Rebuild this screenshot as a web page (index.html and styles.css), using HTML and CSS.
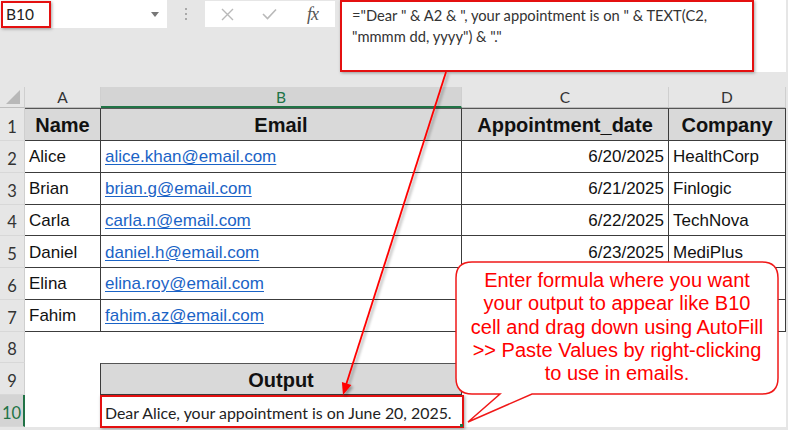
FILE: index.html
```html
<!DOCTYPE html>
<html>
<head>
<meta charset="utf-8">
<link rel="stylesheet" href="styles.css">
</head>
<body>
<div class="app">
  <div class="formula-row">
    <div class="namebox">
      <span class="name-ref">B10</span>
      <svg class="caret" width="8" height="5" viewBox="0 0 8 5"><path d="M0 0 H8 L4 5 Z" fill="#777"/></svg>
    </div>
    <div class="dots"><span></span><span></span><span></span></div>
    <div class="fbtns">
      <svg class="ico-x" width="13" height="13" viewBox="0 0 13 13"><path d="M1 1 L12 12 M12 1 L1 12" stroke="#b9b9b9" stroke-width="1.4" fill="none"/></svg>
      <svg class="ico-check" width="15" height="12" viewBox="0 0 15 12"><path d="M1 6 L5.5 10.5 L14 1.5" stroke="#b9b9b9" stroke-width="1.6" fill="none"/></svg>
      <span class="fx">fx</span>
    </div>
    <div class="fbar">
      <div class="fbar-hl">="Dear " &amp; A2 &amp; ", your appointment is on " &amp; TEXT(C2,<br>"mmmm dd, yyyy") &amp; "."</div>
    </div>
  </div>

  <div class="sheet">
    <div class="corner"><span class="tri"></span></div>
    <div class="colh">A</div>
    <div class="colh sel">B</div>
    <div class="colh">C</div>
    <div class="colh">D</div>

    <div class="rowh">1</div>
    <div class="c th">Name</div>
    <div class="c th">Email</div>
    <div class="c th">Appointment_date</div>
    <div class="c th">Company</div>

    <div class="rowh">2</div>
    <div class="c">Alice</div>
    <div class="c"><span class="link">alice.khan@email.com</span></div>
    <div class="c num">6/20/2025</div>
    <div class="c">HealthCorp</div>

    <div class="rowh">3</div>
    <div class="c">Brian</div>
    <div class="c"><span class="link">brian.g@email.com</span></div>
    <div class="c num">6/21/2025</div>
    <div class="c">Finlogic</div>

    <div class="rowh">4</div>
    <div class="c">Carla</div>
    <div class="c"><span class="link">carla.n@email.com</span></div>
    <div class="c num">6/22/2025</div>
    <div class="c">TechNova</div>

    <div class="rowh">5</div>
    <div class="c">Daniel</div>
    <div class="c"><span class="link">daniel.h@email.com</span></div>
    <div class="c num">6/23/2025</div>
    <div class="c">MediPlus</div>

    <div class="rowh">6</div>
    <div class="c">Elina</div>
    <div class="c"><span class="link">elina.roy@email.com</span></div>
    <div class="c num"></div>
    <div class="c"></div>

    <div class="rowh">7</div>
    <div class="c">Fahim</div>
    <div class="c"><span class="link">fahim.az@email.com</span></div>
    <div class="c num"></div>
    <div class="c"></div>

    <div class="rowh">8</div>
    <div class="e"></div>
    <div class="e"></div>
    <div class="e"></div>
    <div class="e"></div>

    <div class="rowh">9</div>
    <div class="e"></div>
    <div class="c th out-h">Output</div>
    <div class="e"></div>
    <div class="e"></div>

    <div class="rowh sel">10</div>
    <div class="e"></div>
    <div class="out"><span class="out-text">Dear Alice, your appointment is on June 20, 2025.</span><span class="handle"></span></div>
    <div class="e"></div>
    <div class="e"></div>
  </div>

  <svg class="overlay" width="788" height="430" viewBox="0 0 788 430">
    <defs>
      <filter id="sh" x="-20%" y="-20%" width="140%" height="140%">
        <feDropShadow dx="2" dy="2" stdDeviation="1.5" flood-color="#000" flood-opacity="0.35"/>
      </filter>
    </defs>
    <path d="M472 262 H762 Q778 262 778 278 V378 Q778 394 762 394 H532 L468 422 L500 394 H472 Q456 394 456 378 V278 Q456 262 472 262 Z" fill="#fff" stroke="#f01818" stroke-width="1.5"/>
    <g filter="url(#sh)">
      <line x1="446" y1="72" x2="346" y2="385" stroke="#f00" stroke-width="1.8"/>
      <polygon points="343,395 351.4,385.1 341.9,382" fill="#f00"/>
    </g>
  </svg>
  <div class="callout-text">Enter formula where you want<br>your output to appear like B10<br>cell and drag down using AutoFill<br>&gt;&gt; Paste Values by right-clicking<br>to use in emails.</div>
</div>
</body>
</html>
```
FILE: styles.css
```css
* { box-sizing: border-box; }
html, body { margin: 0; padding: 0; }
body {
  width: 788px;
  height: 430px;
  overflow: hidden;
  background: #e6e6e6;
  font-family: "Liberation Sans", Arial, sans-serif;
}
.app {
  position: relative;
  width: 788px;
  height: 430px;
}

/* formula bar row */
.formula-row {
  display: flex;
  align-items: flex-start;
  height: 87px;
}
.namebox {
  width: 167px;
  height: 28px;
  background: #fff;
  display: flex;
  align-items: center;
  justify-content: space-between;
}
.name-ref {
  width: 50px;
  height: 27px;
  margin-left: 1px;
  border: 2.5px solid #e41010;
  box-shadow: 1px 1px 3px rgba(0,0,0,0.35);
  font-family: Lato, "Open Sans", sans-serif;
  font-size: 15.5px;
  color: #222;
  display: flex;
  align-items: center;
  padding-left: 3px;
}
.caret { margin-right: 8px; }
.dots {
  width: 38px;
  height: 28px;
  display: flex;
  flex-direction: column;
  align-items: center;
  justify-content: center;
  gap: 3px;
}
.dots span {
  width: 2px;
  height: 2px;
  background: #a9a9a9;
}
.fbtns {
  width: 130px;
  height: 26px;
  margin-top: 1px;
  background: #fff;
  display: flex;
  align-items: center;
  padding-left: 16px;
}
.ico-check { margin-left: 28px; }
.fx {
  margin-left: 30px;
  font-family: "Liberation Serif", serif;
  font-style: italic;
  font-size: 18px;
  color: #555;
  letter-spacing: -1px;
}
.fbar {
  margin-left: 5px;
  width: 446px;
  height: 72px;
  background: #fff;
}
.fbar-hl {
  width: 414px;
  height: 72px;
  border: 2.5px solid #e41010;
  box-shadow: 1px 1px 3px rgba(0,0,0,0.35);
  padding: 3px 0 0 10px;
  font-family: Lato, "Open Sans", sans-serif;
  font-size: 14.7px;
  line-height: 21px;
  color: #333;
  white-space: nowrap;
}

/* sheet */
.sheet {
  display: grid;
  grid-template-columns: 25px 76px 361px 207px 117px;
  grid-template-rows: 21px 33px repeat(9, 31.75px);
  width: 786px;
  background: #fff;
}
.corner {
  background: #e6e6e6;
  border-right: 1px solid #cfcfcf;
  border-bottom: 1px solid #bdbdbd;
  position: relative;
}
.tri {
  position: absolute;
  right: 4px;
  bottom: 3px;
  width: 0;
  height: 0;
  border-left: 14px solid transparent;
  border-bottom: 14px solid #b8b8b8;
}
.colh {
  background: #e6e6e6;
  border-right: 1px solid #cfcfcf;
  border-bottom: 1px solid #bdbdbd;
  display: flex;
  align-items: center;
  justify-content: center;
  font-family: Lato, "Open Sans", sans-serif;
  font-size: 15.5px;
  color: #333;
}
.colh.sel {
  background: #d4d4d4;
  color: #217346;
  border-bottom: 2px solid #217346;
}
.rowh {
  background: #e6e6e6;
  border-right: 1px solid #cfcfcf;
  border-bottom: 1px solid #d8d8d8;
  display: flex;
  align-items: flex-end;
  justify-content: center;
  padding-bottom: 3px;
  font-family: Lato, "Open Sans", sans-serif;
  font-size: 16.5px;
  color: #333;
}
.rowh.sel {
  background: #d4d4d4;
  color: #217346;
  border-right: 2px solid #217346;
}
.c {
  border-right: 1.5px solid #3c3c3c;
  border-bottom: 1.5px solid #3c3c3c;
  display: flex;
  align-items: center;
  padding: 2px 4px 0 4px;
  font-size: 17px;
  color: #111;
  white-space: nowrap;
  overflow: hidden;
}
.c.num { justify-content: flex-end; }
.c.th {
  background: #d9d9d9;
  justify-content: center;
  font-weight: bold;
  font-size: 20px;
  border-top: 1px solid #555;
}
.out-h {
  border-left: 1.5px solid #3c3c3c;
  margin-left: -1px;
}
.link {
  color: #1a63c6;
  text-decoration: underline;
  text-underline-offset: 2px;
}
.e { background: #fff; }
.out {
  position: relative;
  border: 2.5px solid #e41010;
  box-shadow: 1px 1px 3px rgba(0,0,0,0.35);
  display: flex;
  align-items: center;
  padding: 2px 0 0 3px;
  height: 33px;
  width: 364px;
  margin-left: -1px;
  font-family: Lato, "Open Sans", sans-serif;
  font-size: 15.9px;
  color: #222;
  white-space: nowrap;
}
.handle {
  position: absolute;
  right: -1px;
  bottom: -1px;
  width: 3px;
  height: 3px;
  background: #217346;
}

/* overlays */
.overlay {
  position: absolute;
  left: 0;
  top: 0;
  pointer-events: none;
}
.callout-text {
  position: absolute;
  left: 456px;
  top: 262px;
  width: 322px;
  padding-top: 7px;
  text-align: center;
  font-size: 20px;
  line-height: 23.3px;
  color: #f00;
  white-space: nowrap;
}
```
